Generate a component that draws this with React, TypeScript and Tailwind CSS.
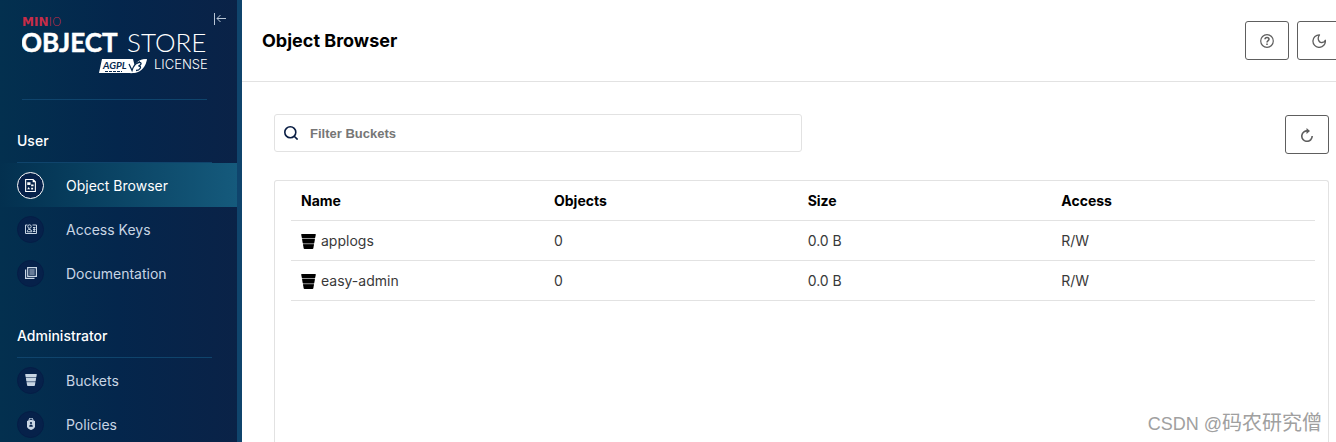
import React, { useState } from 'react';

const BucketIcon = ({ className = '' }: { className?: string }) => (
    <svg className={className} viewBox="0 0 15 15" fill="currentColor" aria-hidden="true">
        <path d="M.8 0h13.400a.6.6 0 0 1 .6.700L14.100 4H.900L.2.700A.6.6 0 0 1 .8 0Z" />
        <path d="M1.100 5h12.800l-.700 4.200H1.800Z" />
        <path d="M2 10.200h11l-.600 3.900a1 1 0 0 1-1 .9H3.600a1 1 0 0 1-1-.9Z" />
        <path d="M1 4h13l-1.500 8h-10Z" opacity=".4" />
    </svg>
);

const BrowserIcon = () => (
    <svg className="size-[13px]" viewBox="0 0 12 12" fill="currentColor" aria-hidden="true">
        <path fillRule="evenodd" d="M1 0h7.600L11 2.400V12H1Zm1 1v10h8V3H8V1Z" />
        <path d="M3 3h3v2.600H3ZM6.600 5h2.200v1.800H6.600ZM3 9.400l1.300-2 1.300 2ZM6.600 8h1.800v1.800H6.600Z" />
    </svg>
);

const KeysIcon = () => (
    <svg className="size-3" viewBox="0 0 12 12" fill="none" stroke="currentColor" aria-hidden="true">
        <path d="M2.500 2H.5v8.500h11V2H7.500" />
        <circle cx="4.500" cy="3.500" r="1.700" />
        <path d="M2.200 8.800c0-3.500 4.600-3.500 4.600 0ZM3.500 5.500l2 2M8 4.500h2.500M8 6.500h2.500M8 8.500h2.500M9.200 4v5" />
    </svg>
);

const DocsIcon = () => (
    <svg className="size-3" viewBox="0 0 12 12" fill="none" stroke="currentColor" aria-hidden="true">
        <path strokeWidth="1.200" d="M2.700.600h8.700v8.700H2.700ZM.600 2.500v8.900h8.900" />
        <path d="M4.300 3h5.400M4.300 5h5.400M4.300 7h5.400" />
    </svg>
);

const PolicyIcon = () => (
    <svg className="size-3" viewBox="0 0 12 12" aria-hidden="true">
        <path d="M4 3V2a2 2 0 0 1 4 0v1" fill="none" stroke="currentColor" />
        <path d="M2 3l4-1.200L10 3v5.500C10 10.500 7.500 11.500 6 12 4.500 11.500 2 10.500 2 8.500Z" fill="currentColor" />
        <circle cx="6" cy="5" r="1.100" fill="#06214a" />
        <path d="M4.200 8.800c0-3 3.600-3 3.600 0Z" fill="#06214a" />
    </svg>
);

const Logo = () => (
    <svg className="block w-[186px] h-[60px]" viewBox="0 0 186 60" fill="#fff" fontFamily="Lato, sans-serif" role="img" aria-label="MinIO Object Store, AGPL v3 License">
        <text x="0" y="10" fontFamily="'DejaVu Sans', sans-serif" fontSize="12" fill="#c72c48">
            <tspan fontWeight="700">MIN</tspan>
            <tspan fontWeight="200">IO</tspan>
        </text>
        <text x="-1" y="36" fontSize="26" fontWeight="700" stroke="#fff" strokeWidth=".5">OBJECT</text>
        <text x="105" y="36" fontSize="26" fontWeight="300">STORE</text>
        <path d="M80 43h28l3 14H77Z" />
        <path d="M108 43h3l2 8c3-5 7-8 12-8-1 7-5 13-13 14h-4Z" />
        <path d="M124.500 43c-7 0-10 3-12.500 7.500l-2-4.500-5 10c2 1.500 5 1.500 8 .5 6-2 11-8 11.500-13.500Z" />
        <text x="81" y="53" fontSize="10" fontWeight="700" fontStyle="italic" fill="#06294f">AGPL</text>
        <path d="M107 48l3 6.500c1-3.500 4-7.500 8-9M115 47.500c4-2.500 6 .5 1.500 2.500 4 0 1.500 4.500-2.500 4.500" fill="none" stroke="#06294f" strokeWidth="1.300" />
        <path d="M83 55.500h17" stroke="#06294f" strokeDasharray="3 1" />
        <text x="132" y="53" fontFamily="Inter, sans-serif" fontSize="13" fontWeight="300">LICENSE</text>
    </svg>
);

const sections = [
    {
        title: 'User',
        items: [
            { label: 'Object Browser', icon: <BrowserIcon /> },
            { label: 'Access Keys', icon: <KeysIcon /> },
            { label: 'Documentation', icon: <DocsIcon /> },
        ],
    },
    {
        title: 'Administrator',
        items: [
            { label: 'Buckets', icon: <BucketIcon className="size-3" /> },
            { label: 'Policies', icon: <PolicyIcon /> },
        ],
    },
];

const buckets = [
    { name: 'applogs', objects: 0, size: '0.0 B', access: 'R/W' },
    { name: 'easy-admin', objects: 0, size: '0.0 B', access: 'R/W' },
];

function Sidebar() {
    return (
        <aside className="w-[242px] shrink-0 border-r-[5px] border-[#0f446c] bg-linear-to-r from-[#03304f] via-[#04264c] to-[#0a2247] overflow-hidden">
            <div className="relative pt-4 pl-[22px] pr-[30px]">
                <Logo />
                <button aria-label="Collapse menu" className="absolute top-[13px] right-[11px] text-[#b9c6d6]">
                    <svg className="block size-3" viewBox="0 0 12 12" fill="none" stroke="currentColor">
                        <path d="M.500 0v12M12 5.500H3M6.500 2L3 5.500 6.500 9" />
                    </svg>
                </button>
                <div className="mt-[23px] h-px bg-[#0f446c]" />
            </div>
            <nav>
                {sections.map((section) => (
                    <div key={section.title}>
                        <h2 className="ml-[17px] mr-[25px] h-[63px] pt-[31px] text-sm leading-5 font-medium text-white border-b border-[#0f446c]">
                            {section.title}
                        </h2>
                        {section.items.map(({ label, icon }) => {
                            const active = label === 'Object Browser';
                            return (
                                <a
                                    key={label}
                                    href="#"
                                    aria-current={active ? 'page' : undefined}
                                    className={`flex items-center gap-[22px] h-11 pl-[17px] text-sm ${active ? 'text-white bg-linear-to-r from-[#03304f] to-[#155a7c]' : 'text-[#c8d5e4]'}`}
                                >
                                    <span className={`flex items-center justify-center size-[27px] rounded-full border bg-[#06214a] ${active ? 'border-white' : 'border-[#051d46]'}`}>
                                        {icon}
                                    </span>
                                    <span className="pt-0.5">{label}</span>
                                </a>
                            );
                        })}
                    </div>
                ))}
            </nav>
        </aside>
    );
}

export default function App() {
    const [filter, setFilter] = useState('');
    const iconButton = 'flex items-center justify-center shrink-0 w-11 h-[39px] rounded-[3px] border border-[#5e5e5e] text-[#5e5e5e]';

    return (
        <div className="relative flex h-screen overflow-hidden bg-white font-['Inter',sans-serif] text-black">
            <Sidebar />
            <main className="flex flex-col flex-1 min-w-0 overflow-hidden">
                <header className="flex items-center justify-between shrink-0 h-[82px] pl-5 border-b border-[#e2e2e2]">
                    <h1 className="text-lg leading-6 font-bold">Object Browser</h1>
                    <div className="flex gap-2 w-[91px]">
                        <button aria-label="Help" className={iconButton}>
                            <svg className="size-[14px]" viewBox="0 0 14 14" fill="none" stroke="currentColor" strokeWidth="1.200">
                                <circle cx="7" cy="7" r="6.300" />
                                <path strokeWidth="1.500" d="M5 5.300c0-2.400 4-2.400 4 0C9 6.700 7 6.600 7 8.500M7 9.500V11" />
                            </svg>
                        </button>
                        <button aria-label="Dark mode" className={iconButton}>
                            <svg className="size-[14px]" viewBox="0 0 14 14" fill="none" stroke="currentColor" strokeWidth="1.300" strokeLinejoin="round">
                                <path d="M7.500.800C5 4 6.500 9 10 8.500c1.500-.100 2.500-.800 3.300-2.300.600 4-2.500 7.200-6.300 7.200A6.300 6.300 0 0 1 7.500.800Z" />
                            </svg>
                        </button>
                    </div>
                </header>

                <div className="flex flex-col flex-1 pt-8 pl-8 pr-[7px]">
                    <div className="flex items-start justify-between h-10">
                        <label className="flex items-center gap-3 w-1/2 h-[38px] px-[9px] border border-[#e2e2e2] rounded-[3px]">
                            <svg className="size-[14px] shrink-0 text-[#081c42]" viewBox="0 0 14 14" fill="none" stroke="currentColor" strokeWidth="1.600" aria-hidden="true">
                                <circle cx="6.300" cy="6.300" r="5.500" />
                                <path d="M10.200 10.200l3.400 3.400" />
                            </svg>
                            <input
                                aria-label="Filter Buckets"
                                placeholder="Filter Buckets"
                                value={filter}
                                onChange={(e) => setFilter(e.target.value)}
                                className="flex-1 min-w-0 pt-0.5 outline-none font-['Liberation_Sans',sans-serif] text-[13px] font-bold placeholder:text-[#767676]"
                            />
                        </label>
                        <button aria-label="Refresh" className={`${iconButton} self-end`}>
                            <svg className="size-[14px]" viewBox="0 0 14 14" fill="none" stroke="currentColor" strokeWidth="1.600">
                                <path d="M8 3A5.200 5.200 0 1 0 12.200 8" />
                                <path d="M6.500 0L10 3.100 6.500 6Z" fill="currentColor" stroke="none" />
                            </svg>
                        </button>
                    </div>

                    <div className="flex-1 mt-[26px] pl-4 pr-[13px] border border-b-0 border-[#e2e2e2] rounded-t-[3px]">
                        <table className="w-full table-fixed text-left text-sm">
                            <thead>
                                <tr className="h-[39px] border-b border-[#e2e2e2] [&>th]:pt-0.5 [&>th]:font-bold">
                                    <th className="w-[263px] pl-[10px]">Name</th>
                                    <th>Objects</th>
                                    <th>Size</th>
                                    <th>Access</th>
                                </tr>
                            </thead>
                            <tbody className="text-[#393939]">
                                {buckets.filter((b) => b.name.includes(filter)).map((bucket) => (
                                    <tr key={bucket.name} className="h-10 border-b border-[#e2e2e2] [&>td]:pt-0.5">
                                        <td className="pl-[10px]">
                                            <span className="flex items-center gap-[5px]">
                                                <BucketIcon className="size-[15px] text-black" />
                                                {bucket.name}
                                            </span>
                                        </td>
                                        <td>{bucket.objects}</td>
                                        <td>{bucket.size}</td>
                                        <td>{bucket.access}</td>
                                    </tr>
                                ))}
                            </tbody>
                        </table>
                    </div>
                </div>
            </main>

            <div className="absolute right-[14px] bottom-1 text-lg leading-7 text-[#a0a0a0] font-['Liberation_Sans','Noto_Sans_CJK_SC',sans-serif]">
                CSDN @<span className="text-xl leading-7">码农研究僧</span>
            </div>
        </div>
    );
}
